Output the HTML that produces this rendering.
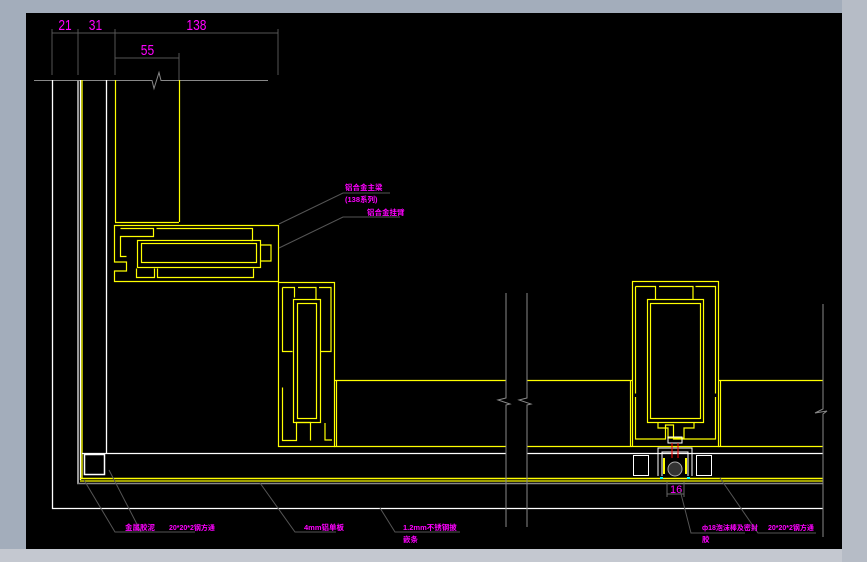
<!DOCTYPE html>
<html><head><meta charset="utf-8"><style>
html,body{margin:0;padding:0;width:867px;height:562px;overflow:hidden;background:#a3adbb;}
svg{display:block}
text{font-family:"Liberation Sans","Noto Sans CJK SC",sans-serif;fill:#ff00ff;}
</style></head><body>
<svg width="867" height="562" viewBox="0 0 867 562" xmlns="http://www.w3.org/2000/svg">
<rect x="0" y="0" width="867" height="562" fill="#a3adbb"/>
<rect x="0" y="549" width="867" height="13" fill="#c4c8d0"/>
<rect x="842" y="0" width="25" height="562" fill="#b6bcc6"/>
<rect x="26" y="13" width="816" height="536" fill="#000"/>

<g stroke="#555" stroke-width="1" fill="none">
<line x1="52" y1="33" x2="278" y2="33"/>
<line x1="52" y1="29" x2="52" y2="75"/>
<line x1="78" y1="29" x2="78" y2="75"/>
<line x1="115" y1="29" x2="115" y2="75"/>
<line x1="278" y1="29" x2="278" y2="75"/>
<line x1="115" y1="58" x2="179" y2="58"/>
<line x1="179" y1="53" x2="179" y2="80"/>
</g>
<g font-size="15" font-family="Liberation Sans Narrow" transform="scale(0.8,1)">
<text x="73" y="30" style="font-family:'Liberation Sans Narrow','Liberation Sans',sans-serif">21</text>
<text x="111" y="30" style="font-family:'Liberation Sans Narrow','Liberation Sans',sans-serif">31</text>
<text x="233" y="30" style="font-family:'Liberation Sans Narrow','Liberation Sans',sans-serif">138</text>
<text x="176" y="55" style="font-family:'Liberation Sans Narrow','Liberation Sans',sans-serif">55</text>
</g>
<path d="M34 80.5H152l2 8 5-16 2 8H268" stroke="#888" fill="none"/>

<g fill="none" stroke-width="1.3">
<path d="M52.5 80V508.5H823" stroke="#fff"/>
<line x1="78" y1="80" x2="78" y2="484" stroke="#999" stroke-width="2"/>
<line x1="80.5" y1="80" x2="80.5" y2="480" stroke="#fff"/>
<line x1="82" y1="80" x2="82" y2="478" stroke="#ff0"/>
<line x1="106.5" y1="80" x2="106.5" y2="453" stroke="#fff"/>
<line x1="82" y1="453.5" x2="506" y2="453.5" stroke="#fff"/>
<line x1="527" y1="453.5" x2="823" y2="453.5" stroke="#fff"/>
<rect x="84.5" y="454.5" width="20" height="20" stroke="#fff" stroke-width="1.5"/>
<line x1="80" y1="478.5" x2="823" y2="478.5" stroke="#ff0" stroke-width="1.5"/>
<line x1="80" y1="481" x2="823" y2="481" stroke="#ff0"/>
<line x1="77" y1="483.5" x2="823" y2="483.5" stroke="#888" stroke-width="1.5"/>
</g>

<g fill="none" stroke="#ff0" stroke-width="1.2">
<line x1="115.5" y1="80" x2="115.5" y2="222"/>
<line x1="179.5" y1="80" x2="179.5" y2="222"/>
<line x1="115" y1="222.5" x2="179" y2="222.5"/>
<path d="M114.5 225.5H278.5V281.5H114.5V271h12v-9h-12z"/>
<path d="M120.5 228.5h33v8h-33v20h6M156.5 228.5h96v12h-2"/>
<rect x="137.5" y="240.5" width="123" height="27"/>
<rect x="141.5" y="243.5" width="115" height="19"/>
<path d="M136.5 268.5v9h18v-9M157.5 268.5v9h96v-9"/>
<path d="M261 245h10v16h-10"/>
<rect x="278.5" y="282.5" width="56" height="164"/>
<rect x="293.5" y="299.5" width="27" height="123"/>
<rect x="297.5" y="303.5" width="19" height="115"/>
<path d="M282.5 287.5h12v10h0M298 287.5h18v12M319 287.5h12v64h-10M282.5 287.5v64h10M282.5 387.5v53h14v-18h14v18M325 423v17h7"/>
<line x1="336.5" y1="380" x2="336.5" y2="446"/>
<line x1="334" y1="380.5" x2="506" y2="380.5"/>
<line x1="334" y1="446.5" x2="506" y2="446.5"/>
<line x1="527" y1="380.5" x2="632" y2="380.5"/>
<line x1="527" y1="446.5" x2="632" y2="446.5"/>
<line x1="718" y1="380.5" x2="823" y2="380.5"/>
<line x1="718" y1="446.5" x2="823" y2="446.5"/>
<rect x="632.5" y="281.5" width="86" height="165"/>
<line x1="630.5" y1="380" x2="630.5" y2="446"/>
<line x1="720.5" y1="380" x2="720.5" y2="446"/>
<rect x="647.5" y="299.5" width="56" height="123"/>
<rect x="650.5" y="303.5" width="50" height="115"/>
<path d="M635.5 286.5h20v13M659 286.5h34v13M695.5 286.5h20v107M635.5 286.5v107M635.5 397v42h30v-14h8v14h42v-42"/>
<path d="M658 422v6h10v10h16v-10h10v-6"/>
</g>

<g fill="none" stroke="#fff" stroke-width="1">
<rect x="633.5" y="455.5" width="15" height="20"/>
<rect x="696.5" y="455.5" width="15" height="20"/>
<path d="M658 476V448h34v28"/>
<path d="M662 476V452h26v24"/>
<rect x="668" y="437" width="14" height="6"/>
</g>
<line x1="672" y1="443" x2="672" y2="458" stroke="#f00"/>
<line x1="678" y1="443" x2="678" y2="458" stroke="#f00"/>
<circle cx="675" cy="469" r="7" fill="#333" stroke="#aaa"/>
<line x1="664" y1="458" x2="664" y2="474" stroke="#ff0" stroke-width="2"/>
<line x1="686" y1="458" x2="686" y2="474" stroke="#ff0" stroke-width="2"/>
<rect x="660" y="477" width="3" height="2" fill="#0ff"/>
<rect x="687" y="477" width="3" height="2" fill="#0ff"/>
<g stroke="#666" fill="none"><line x1="667" y1="482" x2="667" y2="497"/><line x1="684" y1="482" x2="684" y2="497"/><line x1="667" y1="494" x2="684" y2="494"/></g>
<text x="670" y="493" font-size="11">16</text>

<g fill="none" stroke="#888">
<path d="M506 293V398l-8 2 12 4-4 1V527"/>
<path d="M527 293V398l-8 2 12 4-4 1V527"/>
<path d="M823 304V409l-8 4 12 -2-4 3V537"/>
</g>

<g fill="none" stroke="#555">
<path d="M279 224L343 193H390"/>
<path d="M279 248L343 217H400"/>
<path d="M84 480L115 532H154"/>
<path d="M109 470L141 532H195"/>
<path d="M260 483L295 532H336"/>
<path d="M380 508L395 532H460"/>
<path d="M680 490L691 533H745"/>
<path d="M720 478L758 533H816"/>
</g>
<g font-size="7.5" font-weight="bold">
<text x="345" y="190">铝合金主梁</text>
<text x="345" y="202">(138系列)</text>
<text x="367" y="215">铝合金挂臂</text>
<text x="125" y="530">金属胶泥</text>
<text x="169" y="530" font-size="7">20*20*2钢方通</text>
<text x="304" y="530">4mm铝单板</text>
<text x="403" y="530">1.2mm不锈钢披</text>
<text x="403" y="542">嵌条</text>
<text x="702" y="530" font-size="7">ф18泡沫棒及密封</text>
<text x="702" y="542">胶</text>
<text x="768" y="530" font-size="7">20*20*2钢方通</text>
</g>
</svg>
</body></html>
